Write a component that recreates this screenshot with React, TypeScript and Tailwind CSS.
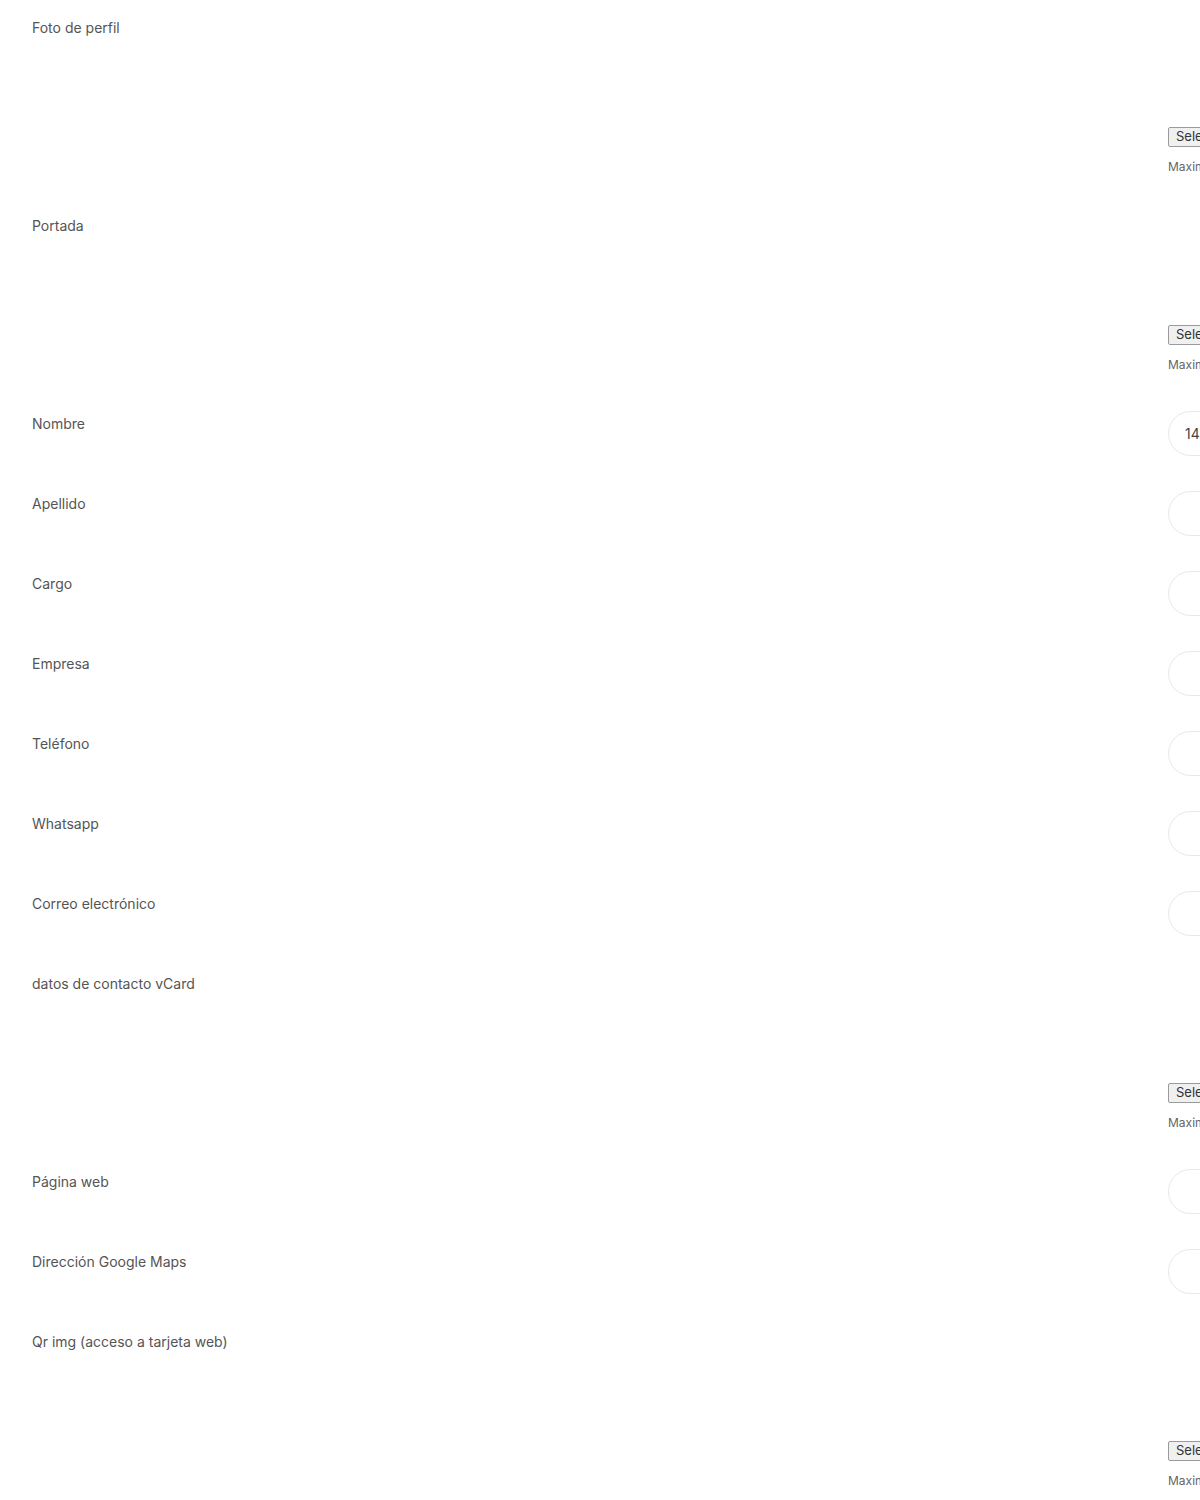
import React from 'react';

type Field =
  | { kind: 'image'; label: string }
  | { kind: 'text'; label: string; value?: string };

const fields: Field[] = [
  { kind: 'image', label: 'Foto de perfil' },
  { kind: 'image', label: 'Portada' },
  { kind: 'text', label: 'Nombre', value: '14' },
  { kind: 'text', label: 'Apellido' },
  { kind: 'text', label: 'Cargo' },
  { kind: 'text', label: 'Empresa' },
  { kind: 'text', label: 'Teléfono' },
  { kind: 'text', label: 'Whatsapp' },
  { kind: 'text', label: 'Correo electrónico' },
  { kind: 'image', label: 'datos de contacto vCard' },
  { kind: 'text', label: 'Página web' },
  { kind: 'text', label: 'Dirección Google Maps' },
  { kind: 'image', label: 'Qr img (acceso a tarjeta web)' },
];

function ImageField() {
  return (
    <div className="pb-[38px]">
      {/* empty preview area */}
      <div className="h-[112px]" />
      <div className="flex items-center gap-1 h-[20px]">
        <span className="h-[20px] px-[7px] flex items-center border border-[#9a9a9a] bg-[#f0f0f0] rounded-[2px] text-[13px] text-[#333] whitespace-nowrap">
          Seleccionar archivo
        </span>
        <span className="text-[13px] text-[#333] whitespace-nowrap">Ningún archivo seleccionado</span>
      </div>
      <p className="mt-[12px] text-xs leading-4 text-[#666] whitespace-nowrap">
        Maximum upload file size: 2 MB.
      </p>
    </div>
  );
}

function TextField({ value }: { value?: string }) {
  return (
    <div className="pb-[35px]">
      <div className="h-[45px] w-[420px] rounded-full border border-[#e8e8e8] bg-white flex items-center px-4 text-sm text-[#444]">
        {value}
      </div>
    </div>
  );
}

export default function App() {
  return (
    <div className="w-full overflow-hidden bg-white" style={{ fontFamily: 'Inter, "Noto Sans", sans-serif' }}>
      <div className="pt-[15px] pl-8 flex flex-col">
        {fields.map((f) => (
          <div key={f.label} className="flex">
            <div className="w-[1136px] shrink-0 pt-[3px] text-sm leading-5 text-[#555]">{f.label}</div>
            <div className="shrink-0">
              {f.kind === 'image' ? <ImageField /> : <TextField value={f.value} />}
            </div>
          </div>
        ))}
      </div>
    </div>
  );
}
